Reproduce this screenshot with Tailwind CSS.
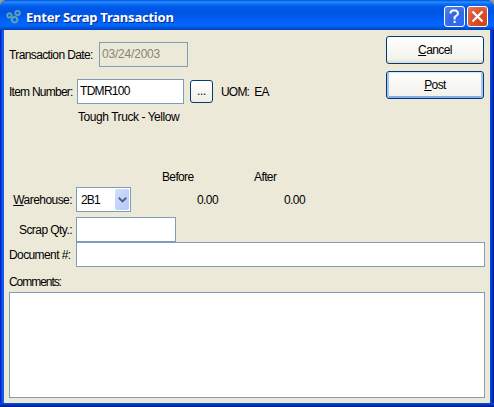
<!DOCTYPE html>
<html lang="en">
<head>
<meta charset="utf-8">
<title>Enter Scrap Transaction</title>
<script src="https://cdn.jsdelivr.net/npm/@tailwindcss/browser@4"></script>
</head>
<body class="w-[494px] h-[407px] overflow-hidden bg-[#9b9b8d] font-['Liberation_Sans',Arial,sans-serif] text-[12px] leading-[14px] text-black">
<main class="w-[494px] h-[407px] flex flex-col rounded-t-[7px] overflow-hidden bg-[#0831d9]">
  <header class="h-[30px] shrink-0 flex items-center pl-[6px] pr-[6px] pt-[3px] bg-[linear-gradient(180deg,#0050d8_0,#2a8dff_2px,#0870f5_4px,#0058e6_7px,#0055e3_13px,#005df4_19px,#0268ff_25px,#005be8_27px,#0040bd_30px)]">
    <svg class="w-[17px] h-[16px] shrink-0" viewBox="0 0 17 16" fill="none">
      <g stroke="#5aa8bb" stroke-width="1.8">
        <circle cx="3.4" cy="6.4" r="2.1"/><circle cx="11.6" cy="4" r="2.2"/><circle cx="8.6" cy="10.7" r="2.7"/>
      </g>
      <g stroke="#4f89a0" stroke-width="1" stroke-dasharray="1 1.4">
        <circle cx="3.4" cy="6.4" r="3"/><circle cx="11.6" cy="4" r="3.1"/><circle cx="8.6" cy="10.7" r="3.7"/>
      </g>
    </svg>
    <h1 class="ml-[3px] grow whitespace-nowrap font-['Noto_Sans','Open_Sans',sans-serif] font-bold text-[13px] leading-[18px] tracking-[-0.23px] text-white [text-shadow:1px_1px_0_#0a2a8c]">Enter Scrap Transaction</h1>
    <button aria-label="Help" class="w-[21px] h-[21px] mr-[2px] rounded-[3px] border border-white bg-[radial-gradient(circle_at_75%_80%,#2b6cf8,#3568e2_50%,#5585ec)] flex items-center justify-center">
      <svg class="w-[19px] h-[19px]" viewBox="0 0 19 19" fill="none" stroke="#fff" stroke-width="2"><path d="M5.6 6.6V5L7.2 3.6H11L12.8 5.2V7.4L9.6 10.2V12.4"/><path d="M9.6 13.8V16"/></svg>
    </button>
    <button aria-label="Close" class="w-[21px] h-[21px] rounded-[3px] border border-white bg-[radial-gradient(circle_at_75%_80%,#d84210,#d9502c_50%,#e87b60)] flex items-center justify-center">
      <svg class="w-[19px] h-[19px]" viewBox="0 0 19 19" stroke="#fff" stroke-width="2.3"><path d="M4.5 4.5L14.5 14.5M14.5 4.5L4.5 14.5"/></svg>
    </button>
  </header>
  <div class="grow min-h-0 px-[4px] pb-[4px] bg-[linear-gradient(90deg,#0019cf_0,#0831d9_1px,#166aee_3px,#0855dd_4px,#0855dd_490px,#0441d8_491px,#0029b5_493px,#00138c_494px)]">
    <section class="relative w-[486px] h-[373px] bg-[#ece9d8] pl-[5px] pr-[5px] pt-[6px] flex flex-col">
      <div class="flex justify-between h-[143px]">
        <div class="pt-[6px]">
          <div class="flex items-center h-[25px]">
            <label class="w-[90px] whitespace-nowrap tracking-[-0.62px]">Transaction Date:</label>
            <div class="w-[89px] h-[25px] border border-[#7f9db9] pl-[2px] leading-[23px] tracking-[-0.2px] text-[#878476]">03/24/2003</div>
          </div>
          <div class="flex items-center h-[25px] mt-[12px]">
            <label class="w-[68px] whitespace-nowrap tracking-[-0.75px]">Item Number:</label>
            <div class="w-[107px] h-[25px] border border-[#7f9db9] bg-white pl-[2px] leading-[23px] tracking-[-0.7px]">TDMR100</div>
            <button class="ml-[6px] w-[23px] h-[23px] rounded-[3px] border border-[#003c74] bg-linear-to-b from-white to-[#efede5] leading-[19px] tracking-[-0.3px]">...</button>
            <span class="ml-[8px] whitespace-pre tracking-[-0.8px]">UOM:  EA</span>
          </div>
          <p class="ml-[69px] mt-[6px] tracking-[-0.44px]">Tough Truck - Yellow</p>
        </div>
        <div class="w-[99px] flex flex-col gap-[7px]">
          <button class="w-[98px] h-[28px] rounded-[3px] border border-[#003c74] bg-[linear-gradient(180deg,#fff,#f3f2ec_85%,#dcd8cb)] tracking-[-0.6px]"><u>C</u>ancel</button>
          <button class="w-[98px] h-[28px] rounded-[3px] border border-[#003c74] bg-[linear-gradient(180deg,#fff,#f1f0ea)] shadow-[inset_0_1px_0_#cee7ff,inset_2px_0_0_#a9c4f1,inset_-2px_0_0_#a9c4f1,inset_0_-2px_0_#8aaaea] tracking-[-0.6px]"><u>P</u>ost</button>
        </div>
      </div>
      <div class="-mt-[9px] flex h-[14px]">
        <span class="ml-[153px] w-[92px] tracking-[-0.65px]">Before</span><span class="tracking-[-0.6px]">After</span>
      </div>
      <div class="mt-[3px] flex items-center h-[25px]">
        <label class="w-[67px] pr-[4px] text-right whitespace-nowrap tracking-[-0.55px]"><u>W</u>arehouse:</label>
        <div class="w-[55px] h-[25px] border border-[#7f9db9] bg-white flex items-center justify-between pl-[4px] pr-[1px]">
          <span class="tracking-[-0.9px]">2B1</span>
          <span class="w-[14px] h-[21px] rounded-[2px] bg-linear-to-br from-[#d3dffc] to-[#b4c8f6] flex items-center justify-center">
            <svg class="w-[9px] h-[6px]" viewBox="0 0 9 6" fill="none" stroke="#4d6185" stroke-width="2"><path d="M.8 .8L4.5 4.4L8.2 .8"/></svg>
          </span>
        </div>
        <span class="w-[87px] text-right tracking-[-0.6px]">0.00</span><span class="w-[87px] text-right tracking-[-0.6px]">0.00</span>
      </div>
      <div class="mt-[5px] flex items-center h-[25px]">
        <label class="w-[67px] pr-[4px] text-right whitespace-nowrap tracking-[-0.55px]">Scrap Qty.:</label>
        <div class="w-[100px] h-[25px] border border-[#7f9db9] bg-white"></div>
      </div>
      <div class="flex items-center h-[25px]">
        <label class="w-[67px] whitespace-nowrap tracking-[-0.6px]">Document #:</label>
        <div class="w-[409px] h-[25px] border border-[#7f9db9] bg-white"></div>
      </div>
      <label class="mt-[8px] h-[17px] tracking-[-1.05px]">Comments:</label>
      <div class="w-[476px] h-[106px] border border-[#7f9db9] bg-white"></div>
    </section>
    <div class="-mx-[4px] h-[4px] bg-linear-to-b from-[#0855dd] to-[#00138c]"></div>
  </div>
</main>
</body>
</html>
